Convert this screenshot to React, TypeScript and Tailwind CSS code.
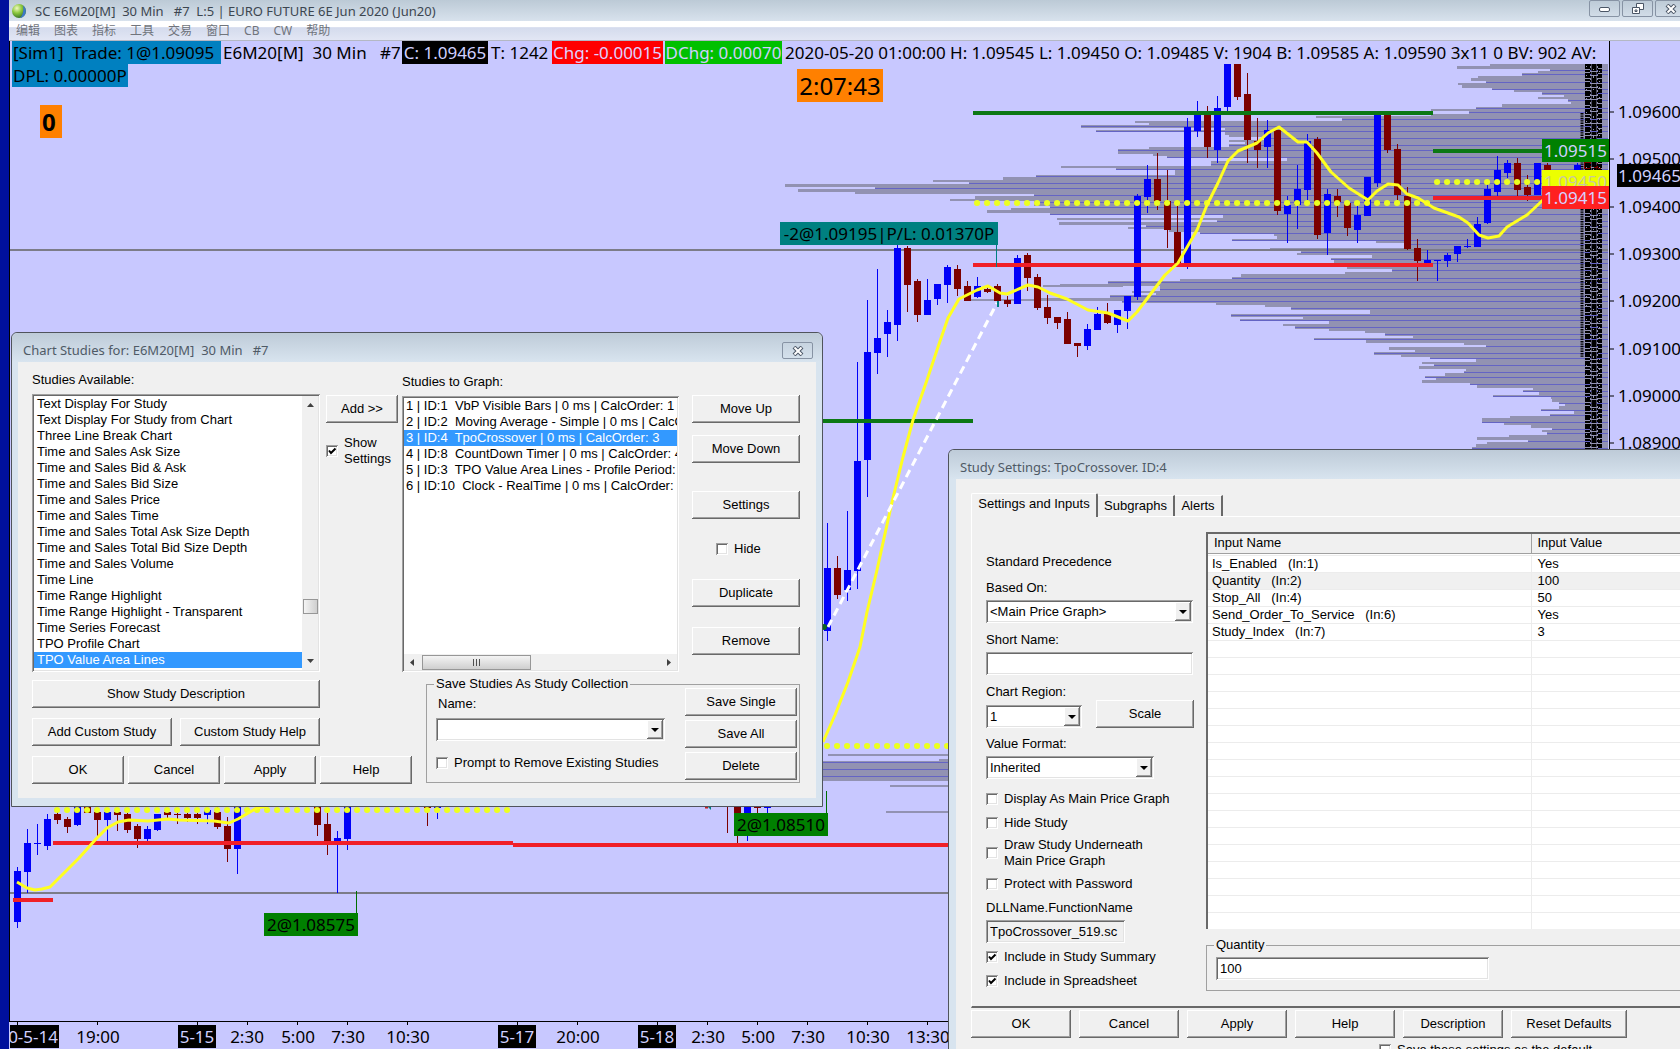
import { type ReactNode, useId } from "react";
import clsx from "clsx";

const RAISED =
  "bg-[#f0f0f0] shadow-[inset_-1px_-1px_0_#696969,inset_1px_1px_0_#ffffff,inset_-2px_-2px_0_#a0a0a0]";
const SUNKEN =
  "shadow-[inset_1px_1px_0_#a0a0a0,inset_-1px_-1px_0_#ffffff,inset_2px_2px_0_#696969,inset_-2px_-2px_0_#e3e3e3]";
const UI_FONT = "font-['Liberation_Sans',Arial,sans-serif]";
const CHART_FONT = "font-['Noto_Sans','Noto_Sans_CJK_SC',sans-serif]";

// [x, high, open/close top, open/close bottom, low]
type Candle = [number, number, number, number, number];

const UP: Candle[] = [
  [17, 867, 871, 922, 928],
  [27, 829, 843, 872, 893],
  [37, 824, 843, 844, 855],
  [47, 814, 819, 846, 850],
  [77, 806, 806, 825, 826],
  [107, 812, 812, 820, 842],
  [147, 826, 829, 839, 841],
  [157, 814, 814, 830, 831],
  [207, 808, 810, 815, 824],
  [237, 806, 806, 849, 874],
  [337, 831, 838, 841, 893],
  [347, 806, 806, 839, 850],
  [437, 806, 806, 808, 819],
  [747, 806, 806, 813, 841],
  [767, 806, 806, 808, 813],
  [827, 523, 568, 631, 641],
  [847, 511, 570, 590, 601],
  [857, 362, 461, 571, 589],
  [867, 300, 352, 460, 497],
  [877, 269, 338, 353, 374],
  [887, 310, 322, 334, 357],
  [897, 245, 248, 325, 341],
  [927, 279, 300, 315, 315],
  [937, 284, 284, 299, 305],
  [947, 265, 267, 285, 303],
  [977, 277, 286, 297, 298],
  [1017, 255, 258, 304, 304],
  [1087, 324, 329, 346, 350],
  [1097, 307, 314, 330, 330],
  [1117, 310, 310, 325, 333],
  [1127, 296, 296, 311, 329],
  [1137, 194, 196, 297, 300],
  [1147, 165, 179, 197, 213],
  [1187, 118, 127, 263, 269],
  [1197, 101, 114, 131, 137],
  [1217, 96, 108, 150, 163],
  [1227, 64, 64, 107, 111],
  [1267, 120, 130, 147, 168],
  [1287, 196, 205, 214, 243],
  [1297, 165, 189, 205, 229],
  [1307, 134, 141, 190, 200],
  [1327, 189, 194, 233, 255],
  [1357, 203, 215, 230, 243],
  [1367, 177, 177, 216, 216],
  [1377, 114, 114, 183, 187],
  [1427, 250, 260, 263, 263],
  [1437, 260, 260, 261, 281],
  [1447, 253, 255, 261, 267],
  [1457, 246, 246, 254, 262],
  [1467, 239, 246, 247, 248],
  [1477, 217, 224, 247, 247],
  [1487, 181, 189, 223, 224],
  [1497, 156, 170, 192, 196],
  [1507, 160, 163, 173, 178],
  [1537, 163, 163, 195, 195],
  [1577, 163, 165, 170, 170],
];

const DOWN: Candle[] = [
  [57, 812, 814, 820, 824],
  [67, 817, 819, 827, 833],
  [87, 806, 806, 813, 813],
  [97, 812, 812, 820, 836],
  [117, 812, 812, 815, 831],
  [127, 813, 814, 830, 833],
  [137, 824, 826, 839, 848],
  [167, 812, 812, 815, 818],
  [177, 813, 814, 815, 824],
  [187, 813, 814, 818, 822],
  [197, 813, 814, 818, 824],
  [217, 806, 812, 827, 829],
  [227, 817, 826, 849, 862],
  [317, 806, 806, 825, 836],
  [327, 813, 824, 841, 855],
  [427, 806, 806, 808, 826],
  [727, 806, 806, 806, 833],
  [737, 806, 806, 813, 843],
  [757, 806, 806, 808, 813],
  [837, 556, 568, 595, 599],
  [907, 246, 248, 285, 312],
  [917, 279, 281, 315, 322],
  [957, 265, 269, 289, 296],
  [967, 281, 286, 301, 301],
  [987, 285, 289, 292, 293],
  [997, 284, 286, 301, 306],
  [1007, 296, 300, 304, 307],
  [1027, 253, 255, 278, 291],
  [1037, 274, 277, 308, 310],
  [1047, 295, 307, 318, 324],
  [1057, 317, 317, 323, 329],
  [1067, 312, 319, 344, 344],
  [1077, 343, 343, 346, 357],
  [1107, 303, 314, 323, 324],
  [1157, 153, 179, 201, 210],
  [1167, 170, 201, 230, 248],
  [1177, 206, 232, 263, 263],
  [1207, 106, 115, 147, 158],
  [1237, 64, 64, 97, 100],
  [1247, 73, 94, 140, 163],
  [1257, 118, 141, 150, 168],
  [1277, 130, 130, 211, 215],
  [1317, 137, 139, 235, 239],
  [1337, 189, 196, 202, 217],
  [1347, 203, 203, 228, 236],
  [1387, 115, 115, 150, 153],
  [1397, 144, 149, 195, 200],
  [1407, 187, 196, 249, 250],
  [1417, 239, 248, 261, 281],
  [1517, 158, 163, 190, 197],
  [1527, 175, 187, 195, 201],
  [1547, 163, 165, 172, 172],
  [1587, 161, 162, 169, 169],
  [1597, 163, 165, 170, 170],
];

// Volume by price: each block is a start y and the left edges of the bars below it
const ROW = 2.3615;
const PROFILE: [number, number[]][] = [
  [64, [1490, 1457, 1550, 1538, 1522, 1478, 1471, 1486, 1458, 1462, 1492, 1514, 1542, 1564, 1538, 1568, 1571, 1502, 1476, 1431, 1469]],
  [113.6, [1431, 1316, 1342, 1135, 1149, 1081, 1225, 1096, 1225, 1229, 1264, 1229, 1245, 1229, 1149, 1118, 1118, 1153, 1167, 1287, 1211]],
  [163.2, [1211, 1061, 1116, 1175, 1175, 1036, 1003, 933, 969, 785, 875, 798, 855, 1034, 975, 950, 1034, 1034, 1050, 1011, 987]],
  [212.8, [1050, 1223, 1057, 1217, 1059, 1146, 1128, 1169, 1200, 1274, 1277, 1232, 1376, 1404, 1404, 1270, 1301, 1297, 1372, 1331, 1334]],
  [262.4, [1334, 1347, 1347, 1392, 1345, 1241, 1232, 1180, 1108, 1060, 1160, 1160, 1132, 1156, 1110, 1040, 1122, 1216, 1265, 1291, 1370]],
  [312, [1370, 1231, 1303, 1240, 1329, 1283, 1295, 1329, 1365, 1385, 1413, 1314, 1366, 1464, 1486, 1389, 1415, 1374, 1401, 1430, 1476]],
  [361.6, [1422, 1434, 1419, 1466, 1464, 1445, 1425, 1436, 1422, 1470, 1477, 1533, 1523, 1539, 1493, 1551, 1552, 1559, 1565, 1559, 1541]],
  [411.2, [1574, 1550, 1510, 1482, 1482, 1504, 1531, 1552, 1542, 1547, 1509, 1477, 1528, 1487, 1476, 1472, 1472]],
];
const BARS = PROFILE.flatMap(([y, lefts]) =>
  lefts.map((x, i) => {
    const top = Math.round(y + i * ROW);
    return { x, y: top, h: Math.round(y + (i + 1) * ROW) - top };
  }),
);

const AVERAGE_LEFT =
  "17,882 27,888 35,890 42,889 50,887 79,858 96,839 107,828 118,822 129,820 148,821 168,819 179,820 214,821 229,823 238,819 257,808 268,806";
const AVERAGE_RIGHT =
  "823,742 835,715 848,682 860,647 867,612 877,570 892,502 903,457 913,420 927,380 938,347 948,318 959,299 977,290 988,286 1000,293 1007,294 1028,285 1038,287 1050,293 1067,299 1088,310 1108,313 1128,321 1137,312 1165,275 1178,263 1197,230 1207,205 1218,183 1228,161 1238,151 1257,143 1268,133 1279,127 1298,142 1307,142 1317,153 1331,172 1349,188 1368,200 1377,191 1388,184 1398,185 1407,194 1418,198 1434,208 1459,217 1468,223 1479,235 1488,238 1499,236 1507,227 1527,215 1543,200";

const PRICES = ["1.09600", "1.09500", "1.09400", "1.09300", "1.09200", "1.09100", "1.09000", "1.08900"];

const TIMES = [
  { x: 98, text: "19:00" },
  { x: 247, text: "2:30" },
  { x: 298, text: "5:00" },
  { x: 348, text: "7:30" },
  { x: 408, text: "10:30" },
  { x: 578, text: "20:00" },
  { x: 708, text: "2:30" },
  { x: 758, text: "5:00" },
  { x: 808, text: "7:30" },
  { x: 868, text: "10:30" },
  { x: 928, text: "13:30" },
];
const DATES = [
  { x: 197, text: "5-15" },
  { x: 517, text: "5-17" },
  { x: 657, text: "5-18" },
];
const TICKS = [17, 97, 197, 247, 297, 347, 407, 517, 577, 657, 707, 757, 807, 867, 927];

const STUDIES = [
  "Text Display For Study",
  "Text Display For Study from Chart",
  "Three Line Break Chart",
  "Time and Sales Ask Size",
  "Time and Sales Bid & Ask",
  "Time and Sales Bid Size",
  "Time and Sales Price",
  "Time and Sales Time",
  "Time and Sales Total Ask Size Depth",
  "Time and Sales Total Bid Size Depth",
  "Time and Sales Volume",
  "Time Line",
  "Time Range Highlight",
  "Time Range Highlight - Transparent",
  "Time Series Forecast",
  "TPO Profile Chart",
  "TPO Value Area Lines",
  "Trade Management by Study",
];

const GRAPHED = [
  "1 | ID:1  VbP Visible Bars | 0 ms | CalcOrder: 1",
  "2 | ID:2  Moving Average - Simple | 0 ms | CalcOrder: 2",
  "3 | ID:4  TpoCrossover | 0 ms | CalcOrder: 3",
  "4 | ID:8  CountDown Timer | 0 ms | CalcOrder: 4",
  "5 | ID:3  TPO Value Area Lines - Profile Period: 1 Day",
  "6 | ID:10  Clock - RealTime | 0 ms | CalcOrder: 6",
];

const INPUTS = [
  ["Is_Enabled   (In:1)", "Yes"],
  ["Quantity   (In:2)", "100"],
  ["Stop_All   (In:4)", "50"],
  ["Send_Order_To_Service   (In:6)", "Yes"],
  ["Study_Index   (In:7)", "3"],
];

function Candles({ data, color }: { data: Candle[]; color: string }) {
  return (
    <g fill={color} shapeRendering="crispEdges">
      {data.map(([x, high, top, bottom, low]) => (
        <g key={x}>
          <rect x={x} y={high} width={1} height={low - high} />
          <rect x={x - 3} y={top} width={7} height={bottom - top} />
        </g>
      ))}
    </g>
  );
}

function Dots({ from, to, y }: { from: number; to: number; y: number }) {
  return (
    <path
      d={`M${from} ${y}H${to}`}
      stroke="#ecff20"
      strokeWidth={6}
      strokeLinecap="round"
      strokeDasharray="0.1 9.9"
    />
  );
}

function Tag({ x, y, w, fill, color, text }: { x: number; y: number; w: number; fill: string; color: string; text: string }) {
  return (
    <g>
      <rect x={x} y={y} width={w} height={23} fill={fill} />
      <text x={x + w / 2} y={y + 18} textAnchor="middle" fill={color}>
        {text}
      </text>
    </g>
  );
}

function Chart() {
  let next = 2;
  const lines = BARS.filter((_, i) => {
    if (i !== next) return false;
    next += i % 8 < 3 ? 2 : 3;
    return true;
  });

  return (
    <svg className={clsx("absolute inset-0 size-full text-[17px]", CHART_FONT)} fill="none">
      <g transform="translate(-9 -41)">
        <path d="M9.5 41V1021" stroke="#000" />

        {/* volume by price */}
        <g fill="#9292b2" shapeRendering="crispEdges">
          {BARS.map((b) => (
            <rect key={b.y} x={b.x} y={b.y} width={1608 - b.x} height={b.h} />
          ))}
          <rect x={1043} y={285} width={80} height={2} />
          <rect x={967} y={299} width={160} height={2} />
          <rect x={828} y={754} width={130} height={2} />
          <rect x={939} y={759} width={20} height={2} />
          <rect x={820} y={761} width={140} height={20} />
          <rect x={890} y={785} width={70} height={2} />
          <rect x={886} y={811} width={70} height={2} />
        </g>
        <g fill="#6464c4" shapeRendering="crispEdges">
          {lines.map((b) => (
            <rect key={b.y} x={b.x} y={b.y + 1} width={1608 - b.x} height={1} />
          ))}
          <rect x={820} y={762} width={140} height={1} />
          <rect x={820} y={769} width={140} height={1} />
          <rect x={820} y={776} width={140} height={1} />
        </g>

        <path d="M10 250H1608M10 893H1608" stroke="#7c7c88" strokeWidth={2} />

        <Candles data={UP} color="#0000f8" />
        <Candles data={DOWN} color="#7c0000" />

        {/* volume figures, too dense to read */}
        <g stroke="#000">
          <path d="M1582 113V357" strokeWidth={3} strokeDasharray="1.4 1" />
          <path d="M1587.5 64V449" strokeWidth={5} strokeDasharray="5 1 2 1" />
          <path d="M1594 64V449" strokeWidth={5} strokeDasharray="7 1 3 1" />
          <path d="M1600 64V449" strokeWidth={4} strokeDasharray="4 1" />
          <path d="M1590.5 64V449M1597.5 64V449" strokeDasharray="2 2" />
        </g>
        <g stroke="#9292b2">
          <path d="M1586.5 66V449" strokeDasharray="1 8 1 13" />
          <path d="M1593.5 69V449" strokeDasharray="1 6 2 11" />
          <path d="M1599.5 71V449" strokeDasharray="1 9 1 5" />
        </g>

        <path d="M973 113H1433M823 421H973M1433 151H1542" stroke="#0c7814" strokeWidth={4} />
        <path d="M973 265H1433M53 843H513M513 845H956M1433 198H1542M13 900H53" stroke="#f02028" strokeWidth={4} />

        <Dots from={977} to={1428} y={203} />
        <Dots from={1437} to={1538} y={182} />
        <Dots from={827} to={948} y={746} />
        <Dots from={57} to={508} y={810} />

        <polyline points={AVERAGE_LEFT} stroke="#ffff20" strokeWidth={3} strokeLinejoin="round" />
        <polyline points={AVERAGE_RIGHT} stroke="#ffff20" strokeWidth={3} strokeLinejoin="round" />
        <path d="M828 627L997 303" stroke="#fff" strokeWidth={3} strokeDasharray="8 5" />
        <circle cx={824} cy={627} r={3} fill="#0c6420" />
        <path d="M998 301v6" stroke="#008080" strokeWidth={2} />
        <path d="M705 807h3" stroke="#c02020" strokeWidth={3} />
        <path d="M708 807l3-2v5z" fill="#008080" />

        {/* trades */}
        <path d="M996.5 245V267" stroke="#008080" />
        <path d="M356.5 891V913M826.5 791V813" stroke="#007000" />
        <Tag x={780} y={222} w={218} fill="#008080" color="#000" text="-2@1.09195|P/L: 0.01370P" />
        <Tag x={264} y={913} w={94} fill="#008000" color="#000" text="2@1.08575" />
        <Tag x={734} y={813} w={94} fill="#008000" color="#000" text="2@1.08510" />

        {/* axes */}
        <path d="M1609.5 41V1021M9 1021.5H1680" stroke="#000" />
        {PRICES.map((price, i) => (
          <g key={price}>
            <path d={`M1610 ${112 + Math.round(i * 47.3)}h4`} stroke="#000" />
            <text x={1618} y={118 + Math.round(i * 47.3)} fill="#000">
              {price}
            </text>
          </g>
        ))}
        <Tag x={1542} y={139} w={67} fill="#008000" color="#d0d0ff" text="1.09515" />
        <Tag x={1542} y={170} w={67} fill="#ecff00" color="#c8c8a0" text="1.09450" />
        <Tag x={1542} y={186} w={67} fill="#ff2020" color="#d8d0ff" text="1.09415" />
        <rect x={1617} y={164} width={70} height={23} fill="#000" />
        <text x={1618} y={182} fill="#d0d0ff">
          1.09465
        </text>

        {TICKS.map((x) => (
          <path key={x} d={`M${x}.5 1021v4`} stroke="#000" />
        ))}
        {TIMES.map((t) => (
          <text key={t.x} x={t.x} y={1043} textAnchor="middle" fill="#000">
            {t.text}
          </text>
        ))}
        {DATES.map((d) => (
          <Tag key={d.x} x={d.x - 19} y={1025} w={38} fill="#000" color="#d0d0ff" text={d.text} />
        ))}
        <rect x={10} y={1025} width={49} height={23} fill="#000" />
        <text x={58} y={1043} textAnchor="end" fill="#d0d0ff">
          0-5-14
        </text>
      </g>
    </svg>
  );
}

function Button({ className, children }: { className?: string; children: ReactNode }) {
  return (
    <button type="button" className={clsx("h-7 shrink-0 text-center", RAISED, className)}>
      {children}
    </button>
  );
}

function Check({ checked, className, children }: { checked?: boolean; className?: string; children: ReactNode }) {
  return (
    <label className={clsx("flex items-center gap-1.5", className)}>
      <span className="relative size-3 shrink-0">
        <input
          type="checkbox"
          defaultChecked={checked}
          className={clsx("peer block size-3 appearance-none bg-white", SUNKEN)}
        />
        <svg
          viewBox="0 0 12 12"
          className="pointer-events-none absolute inset-0 hidden size-3 peer-checked:block"
          fill="none"
          stroke="#000"
          strokeWidth={2}
        >
          <path d="M3 5.5l2 2.5 4.5-4.5" />
        </svg>
      </span>
      <span>{children}</span>
    </label>
  );
}

function Combo({ id, options, className }: { id: string; options: string[]; className: string }) {
  return (
    <div className={clsx("relative h-[23px]", className)}>
      <select id={id} className={clsx("block size-full appearance-none bg-white pr-5 pl-1", SUNKEN)}>
        {options.map((o) => (
          <option key={o}>{o}</option>
        ))}
      </select>
      <span
        className={clsx(
          "pointer-events-none absolute top-0.5 right-0.5 bottom-0.5 flex w-4 items-center justify-center",
          RAISED,
        )}
      >
        <svg width="8" height="4" fill="#000">
          <path d="M0 0h8L4 4z" />
        </svg>
      </span>
    </div>
  );
}

function TextBox({ id, value, readOnly, className }: { id: string; value?: string; readOnly?: boolean; className: string }) {
  return (
    <input
      id={id}
      type="text"
      defaultValue={value}
      readOnly={readOnly}
      className={clsx("block h-[23px] px-1", readOnly ? "bg-[#f0f0f0]" : "bg-white", SUNKEN, className)}
    />
  );
}

function CloseGlyph() {
  return (
    <svg width="12" height="10" viewBox="0 0 12 10" fill="none">
      <path d="M2 1l8 8M10 1L2 9" stroke="#4b5666" strokeWidth={4} />
      <path d="M2.5 1.5l7 7M9.5 1.5l-7 7" stroke="#fff" strokeWidth={2} />
    </svg>
  );
}

function StudiesDialog() {
  const nameId = useId();
  return (
    <section
      className={clsx(
        "absolute top-[291px] left-0.5 w-[812px] rounded-t-md border border-[#50545c] bg-[#d8e4ef] px-1.5 pb-2 text-[13px] leading-4",
        UI_FONT,
      )}
    >
      <header className="-mx-1.5 flex h-[29px] items-center justify-between rounded-t-md bg-linear-to-b from-[#becbd8] to-[#d8e4ef] pr-[9px] pl-[11px]">
        <h2 className={clsx("mt-1 text-[13px] whitespace-pre text-[#4f5a66]", CHART_FONT)}>
          {"Chart Studies for: E6M20[M]  30 Min   #7"}
        </h2>
        <button
          type="button"
          aria-label="Close"
          className="mt-1.5 flex h-[17px] w-[31px] items-center justify-center rounded-xs border border-[#8793a4]"
        >
          <CloseGlyph />
        </button>
      </header>

      <div className="bg-[#f0f0f0] px-3.5 pt-2.5 pb-3.5">
        <div className="flex">
          <div className="w-[288px]">
            <h3>Studies Available:</h3>
            <div className={clsx("mt-1.5 flex h-[278px] bg-white p-0.5", SUNKEN)}>
              <ul role="listbox" aria-label="Studies Available" className="h-full flex-1 overflow-hidden">
                {STUDIES.map((s) => (
                  <li
                    key={s}
                    role="option"
                    aria-selected={s === "TPO Value Area Lines"}
                    className={clsx(
                      "h-4 pl-[3px] whitespace-nowrap",
                      s === "TPO Value Area Lines" && "bg-[#3399ff] text-white",
                    )}
                  >
                    {s}
                  </li>
                ))}
              </ul>
              <div className="flex w-4 flex-col items-center bg-[#f0f0f0] py-[7px]">
                <svg width="7" height="4" fill="#404040">
                  <path d="M0 4h7L3.5 0z" />
                </svg>
                <div className="mt-[192px] mb-auto h-[15px] w-[15px] border border-[#979797] bg-linear-to-r from-[#f4f4f4] to-[#cfcfcf]" />
                <svg width="7" height="4" fill="#404040">
                  <path d="M0 0h7L3.5 4z" />
                </svg>
              </div>
            </div>
          </div>

          <div className="mt-[23px] ml-1.5 w-[72px]">
            <Button className="w-full">Add &gt;&gt;</Button>
            <Check checked className="mt-3">
              Show Settings
            </Check>
          </div>

          <div className="mt-0.5 ml-1 w-[277px]">
            <h3>Studies to Graph:</h3>
            <div className={clsx("mt-1.5 flex h-[276px] flex-col bg-white p-0.5", SUNKEN)}>
              <ul role="listbox" aria-label="Studies to Graph" className="flex-1 overflow-hidden">
                {GRAPHED.map((s, i) => (
                  <li
                    key={s}
                    role="option"
                    aria-selected={i === 2}
                    className={clsx("h-4 pl-0.5 whitespace-pre", i === 2 && "bg-[#3399ff] text-white")}
                  >
                    {s}
                  </li>
                ))}
              </ul>
              <div className="flex h-4 items-center justify-between bg-[#f0f0f0] px-1.5">
                <svg width="4" height="7" fill="#404040">
                  <path d="M4 0v7L0 3.5z" />
                </svg>
                <div className="mr-auto ml-2 flex h-[15px] w-[109px] items-center justify-center gap-0.5 border border-[#979797] bg-linear-to-b from-[#f4f4f4] to-[#cfcfcf]">
                  <span className="h-[7px] w-px bg-[#505050]" />
                  <span className="h-[7px] w-px bg-[#505050]" />
                  <span className="h-[7px] w-px bg-[#505050]" />
                </div>
                <svg width="4" height="7" fill="#404040">
                  <path d="M0 0v7l4-3.5z" />
                </svg>
              </div>
            </div>
          </div>

          <div className="mt-[23px] ml-[13px] flex w-[108px] flex-col">
            <Button>Move Up</Button>
            <Button className="mt-3">Move Down</Button>
            <Button className="mt-7">Settings</Button>
            <Check className="mt-[22px] ml-6">Hide</Check>
            <Button className="mt-[22px]">Duplicate</Button>
            <Button className="mt-5">Remove</Button>
          </div>
        </div>

        <div className="mt-2 flex gap-3.5">
          <div className="flex w-[380px] flex-col gap-2.5">
            <Button className="w-[288px]">Show Study Description</Button>
            <div className="flex gap-2">
              <Button className="w-[140px]">Add Custom Study</Button>
              <Button className="w-[140px]">Custom Study Help</Button>
            </div>
            <div className="flex gap-1">
              <Button className="w-[92px]">OK</Button>
              <Button className="w-[92px]">Cancel</Button>
              <Button className="w-[92px]">Apply</Button>
              <Button className="w-[92px]">Help</Button>
            </div>
          </div>

          <fieldset className="-mt-1 flex h-[107px] w-[374px] justify-between border border-[#a0a0a0] pr-0.5 pl-[9px]">
            <legend className="-ml-0.5 px-0.5">Save Studies As Study Collection</legend>
            <div className="pt-1">
              <label htmlFor={nameId} className="ml-0.5 block">
                Name:
              </label>
              <Combo id={nameId} options={[""]} className="mt-1.5 w-[229px]" />
              <Check className="mt-3.5">Prompt to Remove Existing Studies</Check>
            </div>
            <div className="-mt-1 flex w-28 flex-col gap-1">
              <Button>Save Single</Button>
              <Button>Save All</Button>
              <Button>Delete</Button>
            </div>
          </fieldset>
        </div>
      </div>
    </section>
  );
}

function SettingsDialog() {
  const id = useId();
  return (
    <section
      className={clsx(
        "absolute top-[408px] -right-2 bottom-0 left-[939px] flex flex-col overflow-hidden rounded-tl-md border border-b-0 border-[#50545c] bg-[#d8e4ef] text-[13px] leading-4",
        UI_FONT,
      )}
    >
      <header className="flex h-[29px] shrink-0 items-center bg-linear-to-b from-[#becbd8] to-[#d8e4ef] pl-[11px]">
        <h2 className={clsx("mt-1 text-[13px] text-[#4f5a66]", CHART_FONT)}>Study Settings: TpoCrossover. ID:4</h2>
      </header>

      <div className="ml-[7px] flex-1 bg-[#f0f0f0] pt-3.5 pl-[15px]">
        <div role="tablist" className="flex items-end">
          <button role="tab" aria-selected="true" type="button" className="z-10 -mb-px h-6 w-[127px] rounded-t-xs border-t border-r-2 border-l border-t-white border-r-[#696969] border-l-white bg-[#f0f0f0] pb-1">
            Settings and Inputs
          </button>
          <button role="tab" aria-selected="false" type="button" className="h-[21px] w-[77px] border-t border-r-2 border-t-white border-r-[#696969]">
            Subgraphs
          </button>
          <button role="tab" aria-selected="false" type="button" className="h-[21px] w-12 border-t border-r-2 border-t-white border-r-[#696969]">
            Alerts
          </button>
        </div>

        <div className="flex h-[492px] border-t border-b-2 border-l border-t-white border-b-[#696969] border-l-white pl-3.5">
          <div className="flex w-[220px] flex-col items-start pt-[37px]">
            <p>Standard Precedence</p>
            <label htmlFor={`${id}-based`} className="mt-2.5">
              Based On:
            </label>
            <Combo id={`${id}-based`} options={["<Main Price Graph>"]} className="mt-1 w-[207px]" />
            <label htmlFor={`${id}-short`} className="mt-[9px]">
              Short Name:
            </label>
            <TextBox id={`${id}-short`} className="mt-1 w-[207px]" />
            <label htmlFor={`${id}-region`} className="mt-[9px]">
              Chart Region:
            </label>
            <div className="flex items-end gap-3.5">
              <Combo id={`${id}-region`} options={["1"]} className="w-24" />
              <Button className="w-[98px]">Scale</Button>
            </div>
            <label htmlFor={`${id}-format`} className="mt-2">
              Value Format:
            </label>
            <Combo id={`${id}-format`} options={["Inherited"]} className="mt-1 w-[168px]" />
            <Check className="mt-3">Display As Main Price Graph</Check>
            <Check className="mt-2">Hide Study</Check>
            <Check className="mt-1.5 w-[170px]">Draw Study Underneath Main Price Graph</Check>
            <Check className="mt-[7px]">Protect with Password</Check>
            <label htmlFor={`${id}-dll`} className="mt-2">
              DLLName.FunctionName
            </label>
            <TextBox id={`${id}-dll`} value="TpoCrossover_519.sc" readOnly className="mt-1 w-[139px]" />
            <Check checked className="mt-1.5">
              Include in Study Summary
            </Check>
            <Check checked className="mt-2">
              Include in Spreadsheet
            </Check>
          </div>

          <div className="flex flex-1 flex-col pt-[15px]">
            <div className="border-t-2 border-l-2 border-[#696969] bg-white">
              <table className="w-full table-fixed border-collapse text-left">
                <thead>
                  <tr className="h-[19px] border-b border-[#a0a0a0] bg-[#f0f0f0]">
                    <th className="w-[323px] border-r border-[#a0a0a0] p-0 pl-1.5 font-normal">Input Name</th>
                    <th className="p-0 pl-1.5 font-normal">Input Value</th>
                  </tr>
                  <tr className="h-0.5" />
                </thead>
                <tbody>
                  {Array.from({ length: 22 }, (_, i) => (
                    <tr key={i} className={clsx("h-[17px] border-t border-[#ececec]", i === 1 && "bg-[#f0f0f0]")}>
                      <td className="border-r border-[#ececec] p-0 pl-1 whitespace-pre">{INPUTS[i]?.[0]}</td>
                      <td className="p-0 pl-1.5">{INPUTS[i]?.[1]}</td>
                    </tr>
                  ))}
                </tbody>
              </table>
            </div>
            <fieldset className="mt-2 h-[54px] border border-r-0 border-[#a0a0a0] pl-[9px]">
              <legend className="-ml-0.5 px-0.5">Quantity</legend>
              <TextBox id={`${id}-qty`} value="100" className="mt-1 w-[273px]" />
            </fieldset>
          </div>
        </div>

        <div className="mt-0.5 flex gap-2">
          <Button className="w-[100px]">OK</Button>
          <Button className="w-[100px]">Cancel</Button>
          <Button className="w-[100px]">Apply</Button>
          <Button className="w-[100px]">Help</Button>
          <Button className="w-[100px]">Description</Button>
          <Button className="w-[116px]">Reset Defaults</Button>
        </div>
        <Check className="mt-1 ml-[408px]">Save these settings as the default</Check>
      </div>
    </section>
  );
}

export default function App() {
  return (
    <div className="flex h-screen overflow-hidden bg-[#00109c]">
      <div className="w-[9px] shrink-0" />
      <div className="flex min-w-0 flex-1 flex-col">
        <header className="flex h-[21px] shrink-0 items-center bg-linear-to-b from-[#bccad6] to-[#d8e2ed] pl-0.5">
          <svg width="16" height="16" viewBox="0 0 16 16">
            <defs>
              <radialGradient id="orb" cx="0.35" cy="0.3" r="0.7">
                <stop offset="0" stopColor="#f0f8c0" />
                <stop offset="0.5" stopColor="#8cc83c" />
                <stop offset="1" stopColor="#3c7828" />
              </radialGradient>
            </defs>
            <circle cx="8" cy="8" r="7" fill="url(#orb)" />
            <path d="M12 2.500A7 7 0 0 1 9 15c3-3 4-8 3-12.500z" fill="#3c78c8" />
          </svg>
          <h1 className={clsx("ml-2 text-[13px] leading-[18px] whitespace-pre text-[#3c4650]", CHART_FONT)}>
            {"SC E6M20[M]  30 Min   #7  L:5 | EURO FUTURE 6E Jun 2020 (Jun20)"}
          </h1>
          <div className="ml-auto flex h-[17px] shrink-0 gap-0.5 self-start overflow-hidden">
            <button type="button" aria-label="Minimize" className="flex w-[31px] items-center justify-center rounded-xs border border-[#8793a4]">
              <span className="mt-0.5 h-[5px] w-[11px] rounded-xs border border-[#4b5666] bg-white" />
            </button>
            <button type="button" aria-label="Restore" className="flex w-[31px] items-center justify-center rounded-xs border border-[#8793a4]">
              <svg width="12" height="12" viewBox="0 0 12 12" fill="#fff" stroke="#4b5666">
                <path d="M4.500 0.500h7v6h-7z" />
                <path d="M0.500 4.500h7v6h-7z" />
                <path d="M3 7h2v1.500H3z" />
              </svg>
            </button>
            <button type="button" aria-label="Close" className="-mr-1.5 flex w-[31px] items-center justify-center rounded-xs border border-[#8793a4]">
              <CloseGlyph />
            </button>
          </div>
        </header>

        <nav className={clsx("flex h-5 shrink-0 items-center gap-3.5 border-b border-[#b4b8c4] bg-linear-to-b from-white from-30% via-[#d4dbed] via-35% to-[#e2e6f4] pl-[7px] text-xs text-[#70747c]", CHART_FONT)}>
          <a href="#edit">编辑</a>
          <a href="#chart">图表</a>
          <a href="#studies">指标</a>
          <a href="#tools">工具</a>
          <a href="#trade">交易</a>
          <a href="#window">窗口</a>
          <a href="#cb">CB</a>
          <a href="#cw">CW</a>
          <a href="#help">帮助</a>
        </nav>

        <main className="relative flex-1 overflow-hidden bg-[#c8c8ff]">
          <Chart />

          <div className={clsx("relative mr-[71px] ml-[3px] overflow-hidden text-[17px] leading-[23px] whitespace-pre text-black", CHART_FONT)}>
            <div className="flex">
              <span className="w-[209px] shrink-0 bg-[#0080c0] pl-px">[Sim1]  Trade: 1@1.09095</span>
              <span className="w-[181px] shrink-0 pl-0.5">{"E6M20[M]  30 Min   #7"}</span>
              <span className="w-[86px] shrink-0 bg-black text-center text-[#d0d0ff]">C: 1.09465</span>
              <span className="w-16 shrink-0 pl-[3px]">T: 1242</span>
              <span className="w-[111px] shrink-0 bg-[#ff0000] text-center text-[#e0d0ff]">Chg: -0.00015</span>
              <span className="ml-0.5 w-[117px] shrink-0 bg-[#00c000] text-center text-[#d0d0ff]">DChg: 0.00070</span>
              <span className="pl-[3px]">
                2020-05-20 01:00:00 H: 1.09545 L: 1.09450 O: 1.09485 V: 1904 B: 1.09585 A: 1.09590 3x11 0 BV: 902 AV:
              </span>
            </div>
            <span className="block w-[116px] bg-[#0080c0] pl-px">DPL: 0.00000P</span>
          </div>

          <div className={clsx("absolute top-[28px] left-[788px] h-[33px] w-[86px] bg-[#ff8000] text-center text-2xl leading-[33px]", CHART_FONT)}>
            2:07:43
          </div>
          <div className={clsx("absolute top-16 left-[31px] h-[33px] w-[22px] bg-[#ff8000] pl-0.5 text-2xl leading-[33px] font-bold", CHART_FONT)}>
            0
          </div>

          <StudiesDialog />
          <SettingsDialog />
        </main>
      </div>
    </div>
  );
}
